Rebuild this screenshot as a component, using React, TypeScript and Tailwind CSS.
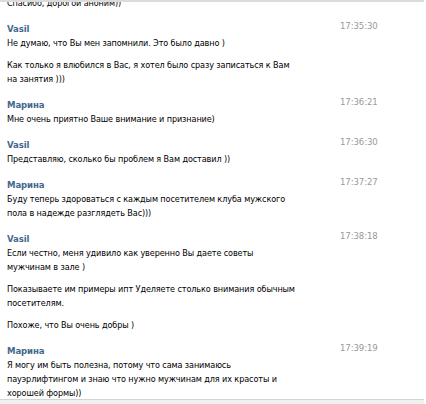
import React from 'react';

type Msg = {
  name: string;
  time: string;
  paras: string[][];
};

const messages: Msg[] = [
  {
    name: 'Vasil',
    time: '17:35:30',
    paras: [
      ['Не думаю, что Вы мен запомнили. Это было давно )'],
      ['Как только я влюбился в Вас, я хотел было сразу записаться к Вам', 'на занятия )))'],
    ],
  },
  {
    name: 'Марина',
    time: '17:36:21',
    paras: [['Мне очень приятно Ваше внимание и признание)']],
  },
  {
    name: 'Vasil',
    time: '17:36:30',
    paras: [['Представляю, сколько бы проблем я Вам доставил ))']],
  },
  {
    name: 'Марина',
    time: '17:37:27',
    paras: [['Буду теперь здороваться с каждым посетителем клуба мужского', 'пола в надежде разглядеть Вас)))']],
  },
  {
    name: 'Vasil',
    time: '17:38:18',
    paras: [
      ['Если честно, меня удивило как уверенно Вы даете советы', 'мужчинам в зале )'],
      ['Показываете им примеры ипт Уделяете столько внимания обычным', 'посетителям.'],
      ['Похоже, что Вы очень добры )'],
    ],
  },
  {
    name: 'Марина',
    time: '17:39:19',
    paras: [
      [
        'Я могу им быть полезна, потому что сама занимаюсь',
        'пауэрлифтингом и знаю что нужно мужчинам для их красоты и',
        'хорошей формы))',
      ],
    ],
  },
];

function Message({ m }: { m: Msg }) {
  return (
    <div className="mt-[12px]">
      <div className="flex items-start h-[14px]">
        <div className="w-[333px] font-bold text-[#45688e] leading-[14px] text-[9.5px]">{m.name}</div>
        <div className="text-[#999999] leading-[14px] -mt-[3px] text-[9.5px]">{m.time}</div>
      </div>
      <div className="flex flex-col gap-[8px]">
        {m.paras.map((p, i) => (
          <div key={i} className="text-black whitespace-nowrap">
            {p.map((line, j) => (
              <div key={j} className="h-[14px] leading-[14px]">
                {line}
              </div>
            ))}
          </div>
        ))}
      </div>
    </div>
  );
}

export default function App() {
  return (
    <div
      className="relative w-[426px] h-[404px] overflow-hidden bg-white text-[9px] leading-[14px] tracking-[-0.1px] font-stretch-condensed"
      style={{ fontFamily: '"DejaVu Sans Condensed", "DejaVu Sans", sans-serif' }}
    >
      <div className="pl-[7px] -mt-[4px]">
        <div className="h-[14px] leading-[14px] text-black">Спасибо, дорогой аноним))</div>
        {messages.map((m, i) => (
          <Message key={i} m={m} />
        ))}
      </div>
      {/* top edge of the scroll area */}
      <div className="absolute top-0 left-0 w-[424px] h-[2px] bg-[#dcdcdc]" />
      {/* bottom bar */}
      <div className="absolute bottom-0 left-0 w-[424px] h-[5px] bg-[#f0f0f0] border-t border-[#d4d4d4]" />
    </div>
  );
}
